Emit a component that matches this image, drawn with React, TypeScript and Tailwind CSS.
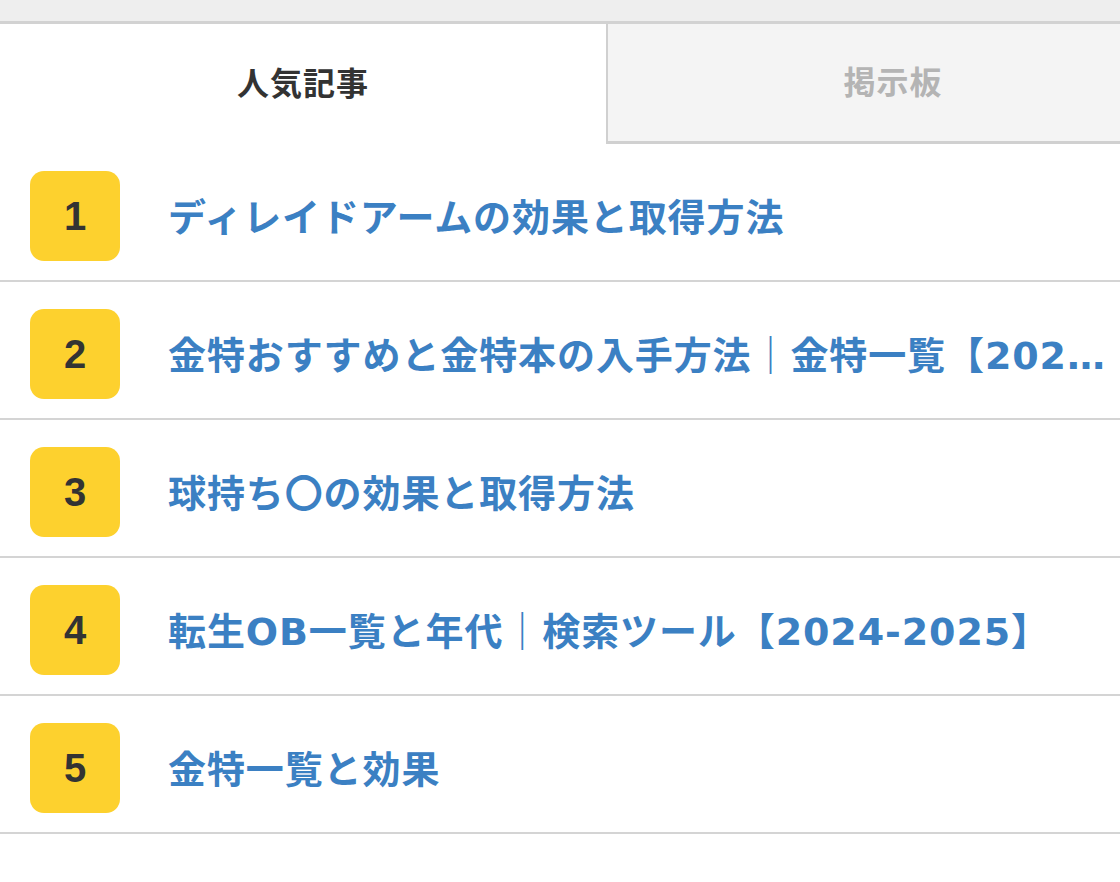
import React from 'react';

const articles = [
  'ディレイドアームの効果と取得方法',
  '金特おすすめと金特本の入手方法｜金特一覧【2024-2025】',
  '球持ち〇の効果と取得方法',
  '転生OB一覧と年代｜検索ツール【2024-2025】',
  '金特一覧と効果',
];

const font = { fontFamily: '"Liberation Sans", "Noto Sans CJK JP", sans-serif' };
const titleFont = { fontFamily: '"DejaVu Sans", "Noto Sans CJK JP", sans-serif' };

export default function App() {
  return (
    <div className="w-[1120px] h-[882px] bg-white overflow-hidden" style={font}>
      <div className="h-[21px] bg-[#eeeeee] border-b-[3px] border-[#d2d2d2] box-content" />

      <div className="flex h-[120px]">
        <div className="w-[606px] flex items-center justify-center text-[32px] font-bold text-[#333333] tracking-[1px]">
          人気記事
        </div>
        <div className="flex-1 flex items-center justify-center pl-[58px] bg-[#f4f4f4] border-l-2 border-b-[3px] border-[#d0d0d0] text-[32px] font-bold text-[#b4b4b4] tracking-[1px]">
          掲示板
        </div>
      </div>

      <ul>
        {articles.map((title, i) => (
          <li
            key={i}
            className="flex items-center gap-[48px] pl-[30px] pr-[4px] pt-[27px] pb-[19px] border-b-2 border-[#d4d4d4]"
          >
            <span className="w-[90px] h-[90px] shrink-0 rounded-[14px] bg-[#fdd12e] flex items-center justify-center text-[40px] font-bold text-[#333333]">
              {i + 1}
            </span>
            <span
              className="min-w-0 truncate text-[38px] leading-[1.3] font-bold text-[#3b80c3] tracking-[0.9px] pt-[6px]"
              style={titleFont}
            >
              {title}
            </span>
          </li>
        ))}
      </ul>
    </div>
  );
}
